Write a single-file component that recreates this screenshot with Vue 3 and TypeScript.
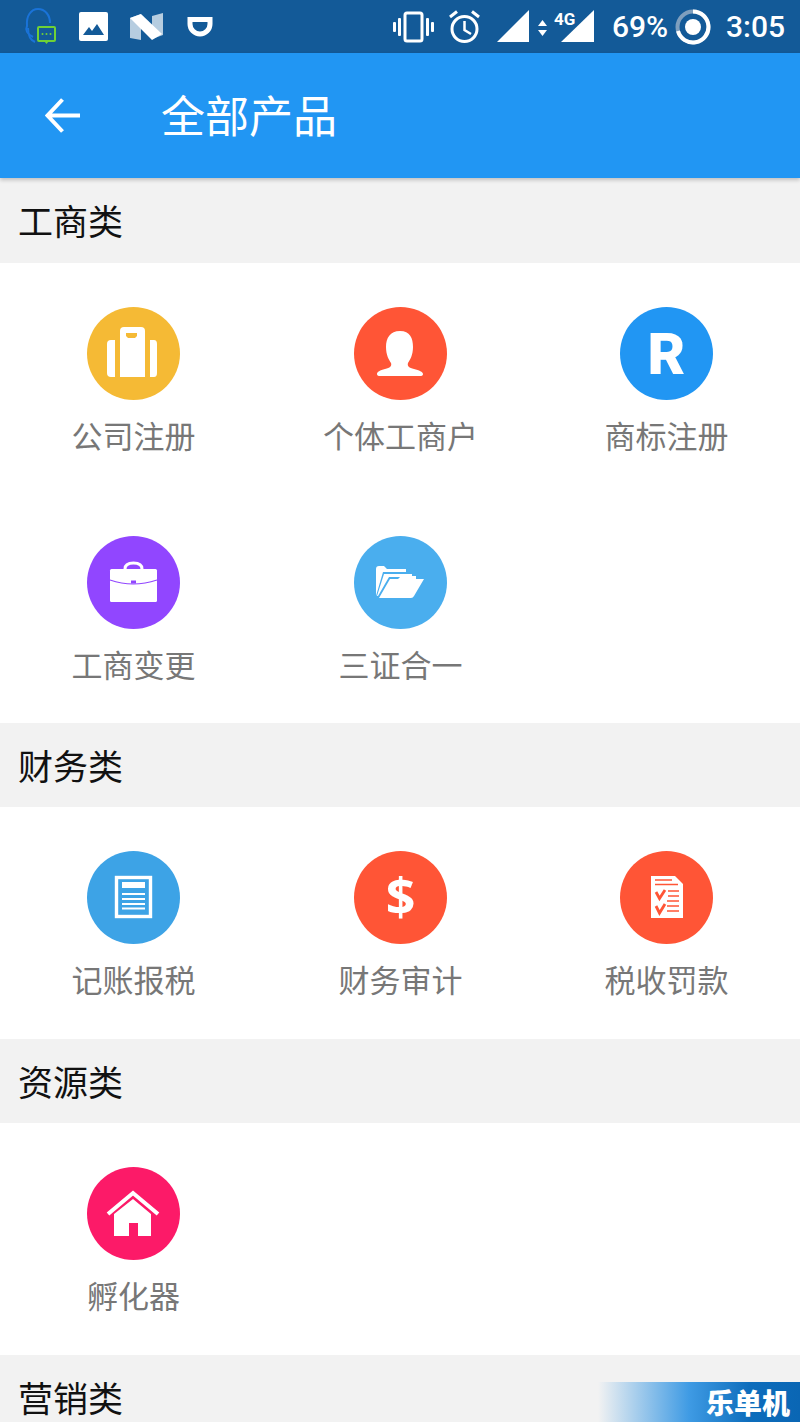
<script setup lang="ts">
type Item = { label: string; color: string; icon: string }
type Section = { title: string; items: Item[]; cls: string }

const sections: Section[] = [
  {
    title: '工商类',
    cls: 'two-rows',
    items: [
      { label: '公司注册', color: '#f5ba35', icon: 'case' },
      { label: '个体工商户', color: '#ff5536', icon: 'person' },
      { label: '商标注册', color: '#2196f3', icon: 'r' },
      { label: '工商变更', color: '#9146ff', icon: 'brief' },
      { label: '三证合一', color: '#4aaeee', icon: 'folder' },
    ],
  },
  {
    title: '财务类',
    cls: 'one-row',
    items: [
      { label: '记账报税', color: '#3da3e6', icon: 'doc' },
      { label: '财务审计', color: '#ff5536', icon: 'dollar' },
      { label: '税收罚款', color: '#ff5536', icon: 'check' },
    ],
  },
  {
    title: '资源类',
    cls: 'one-row',
    items: [{ label: '孵化器', color: '#fc1a68', icon: 'house' }],
  },
  { title: '营销类', cls: 'empty', items: [] },
]
</script>

<template>
  <div class="page">
    <div class="status">
      <svg class="s-head" width="32" height="38" viewBox="0 0 32 38">
        <path d="M9 29C3 26 1 22 3 18C2 8 7 1 14 1C21 1 26 7 26 15" fill="none" stroke="#1a73d8" stroke-width="2" />
        <path d="M4 20C4 26 6 32 11 34" fill="none" stroke="#1a73d8" stroke-width="2" />
        <rect x="14" y="19" width="17" height="14" rx="1" fill="#135a98" stroke="#6fd136" stroke-width="2" />
        <path d="M20 33h5l-2.500 3z" fill="#6fd136" />
        <circle cx="18.500" cy="26" r="1" fill="#6fd136" /><circle cx="22.500" cy="26" r="1" fill="#6fd136" /><circle cx="26.500" cy="26" r="1" fill="#6fd136" />
      </svg>
      <svg class="s-img" width="29" height="29" viewBox="0 0 29 29">
        <rect width="29" height="29" rx="2" fill="#fff" />
        <path d="M4 23L10 15L13 19L18 12L25 23Z" fill="#135a98" />
      </svg>
      <svg class="s-n" width="33" height="27" viewBox="0 0 33 27">
        <path d="M0 5L11 1V27L0 25Z" fill="#b6cde0" />
        <path d="M22 3L33 0V22L22 26Z" fill="#b6cde0" />
        <path d="M0 5L11 1L32 21L22 27Z" fill="#fff" />
      </svg>
      <svg class="s-d" width="26" height="20" viewBox="0 0 26 20">
        <path d="M3 2.500H23V7A10 10 0 0 1 3 7Z" fill="none" stroke="#fff" stroke-width="5" />
      </svg>
      <svg class="s-vib" width="41" height="32" viewBox="0 0 41 32" fill="#fff">
        <rect x="12" y="2" width="17" height="28" rx="2" fill="none" stroke="#fff" stroke-width="3" />
        <rect x="0" y="11" width="3" height="10" rx="1" /><rect x="5" y="7" width="3" height="18" rx="1" />
        <rect x="33" y="7" width="3" height="18" rx="1" /><rect x="38" y="11" width="3" height="10" rx="1" />
      </svg>
      <svg class="s-alarm" width="31" height="34" viewBox="0 0 31 34">
        <circle cx="15.500" cy="19" r="12.500" fill="none" stroke="#fff" stroke-width="3" />
        <path d="M15.500 11V20L22 24" fill="none" stroke="#fff" stroke-width="2.500" />
        <path d="M1 7L8 1.500M30 7L23 1.500" fill="none" stroke="#fff" stroke-width="3" />
      </svg>
      <svg class="s-sig" width="32" height="32" viewBox="0 0 32 32"><path d="M0 32L32 0V32Z" fill="#fff" /></svg>
      <svg class="s-arrows" width="9" height="16" viewBox="0 0 9 16" fill="#fff"><path d="M4.500 0L9 6H0Z" /><path d="M0 10H9L4.500 16Z" /></svg>
      <div class="s-sig2">
        <svg width="33" height="32" viewBox="0 0 33 32"><path d="M0 32L33 0V32Z" fill="#fff" /></svg>
        <span class="s-4g">4G</span>
      </div>
      <span class="s-pct">69%</span>
      <svg class="s-batt" width="36" height="36" viewBox="0 0 36 36">
        <circle cx="18" cy="18" r="15.500" fill="none" stroke="#7f9fbe" stroke-width="4" />
        <path d="M18 2.500A15.500 15.500 0 1 1 3 22" fill="none" stroke="#fff" stroke-width="4" />
        <circle cx="18" cy="18" r="8" fill="#fff" />
      </svg>
      <span class="s-time">3:05</span>
    </div>

    <header class="bar">
      <svg class="back" width="35" height="35" viewBox="0 0 35 35">
        <path d="M35 17.500H3M17.500 1.500L2.500 17.500L17.500 33.500" fill="none" stroke="#fff" stroke-width="4" />
      </svg>
      <h1 class="title">全部产品</h1>
    </header>

    <section v-for="sec in sections" :key="sec.title">
      <h2 class="head">{{ sec.title }}</h2>
      <div v-if="sec.items.length" class="grid" :class="sec.cls">
        <div v-for="item in sec.items" :key="item.label" class="cell">
          <svg class="icon" width="93" height="93" viewBox="0 0 93 93">
            <circle cx="46.500" cy="46.500" r="46.500" :fill="item.color" />
            <g v-if="item.icon === 'case'">
              <path d="M37 20H54Q58 20 58 24V70H33V24Q33 20 37 20Z" fill="#fff" />
              <path d="M39 26H50V29L48 31H41L39 29Z" :fill="item.color" />
              <path d="M28 33V70H24Q20 70 20 66V37Q20 33 24 33Z" fill="#fff" />
              <path d="M63 33V70H67Q70 70 70 66V37Q70 33 67 33Z" fill="#fff" />
            </g>
            <path v-else-if="item.icon === 'person'" d="M46 24C36 24 32 31 32 40C32 48 35 53 37 56C38 59 36 61 31 62C26 63 23 65 23 67Q23 69 26 69H66Q69 69 69 67C69 65 65 63 60 62C55 61 53 59 54 56C56 53 59 48 59 40C59 31 56 24 46 24Z" fill="#fff" />
            <text v-else-if="item.icon === 'r'" x="46.500" y="67" text-anchor="middle" class="glyph-r">R</text>
            <g v-else-if="item.icon === 'brief'">
              <path d="M38 33Q38 27 46.500 27Q55 27 55 33" fill="none" stroke="#fff" stroke-width="3" />
              <rect x="23" y="33" width="47" height="33" rx="1.500" fill="#fff" />
              <path d="M23 44Q46 52 70 44" fill="none" :stroke="item.color" stroke-width="1.200" />
              <rect x="44" y="44.500" width="5" height="3" :fill="item.color" />
            </g>
            <g v-else-if="item.icon === 'folder'" fill="#fff">
              <path d="M22 60V33Q22 30 25 30H30L33 33H52V36H29L22 60Z" />
              <path d="M23 60L30 38H58V41H35L24 60Z" />
              <path d="M25 62L36 43H44L47 40H62V43H70L60 60Q59 62 57 62Z" />
            </g>
            <g v-else-if="item.icon === 'doc'">
              <rect x="29.500" y="26.500" width="34" height="39" fill="none" stroke="#fff" stroke-width="3.400" />
              <rect x="35" y="31" width="23" height="6" fill="#fff" />
              <path d="M35 43H58M35 48H58M35 53H58M35 57.500H58" stroke="#fff" stroke-width="2.200" />
            </g>
            <text v-else-if="item.icon === 'dollar'" x="46.500" y="65" text-anchor="middle" class="glyph-d">$</text>
            <g v-else-if="item.icon === 'check'">
              <path d="M31 25H55L63 33V67H31Z" fill="#fff" />
              <path d="M35 29H52M35 33.500H58" :stroke="item.color" stroke-width="1.500" />
              <path d="M36 41L39.500 47.500L45 39M36 55L39.500 62L45 53" fill="none" :stroke="item.color" stroke-width="2.800" />
              <path d="M48 40H59M48 45H59M47 50H59M47 55H59M47 60H59" :stroke="item.color" stroke-width="1.600" />
            </g>
            <g v-else-if="item.icon === 'house'">
              <path d="M21 47L46 26L71 47" fill="none" stroke="#fff" stroke-width="4" />
              <path d="M27 69V47L46 32L64 47V69H51V56H42V69Z" fill="#fff" />
            </g>
          </svg>
          <span class="label">{{ item.label }}</span>
        </div>
      </div>
    </section>

    <div class="mark"><span>乐单机</span></div>
  </div>
</template>

<style>
html, body { margin: 0; background: #fff; }
</style>

<style scoped>
.page {
  position: relative;
  width: 800px;
  height: 1422px;
  overflow: hidden;
  background: #fff;
  font-family: "Noto Sans CJK SC", "Noto Sans", sans-serif;
}
.status {
  display: flex;
  align-items: flex-start;
  height: 53px;
  background: #135a98;
  color: #fff;
  font-family: Roboto, sans-serif;
}
.status svg { display: block; flex: none; }
.s-head { margin: 8px 0 0 24px; }
.s-img { margin: 12px 0 0 23px; }
.s-n { margin: 13px 0 0 22px; }
.s-d { margin: 17px 0 0 24px; }
.s-vib { margin: 11px 0 0 180px; }
.s-alarm { margin: 10px 0 0 15px; }
.s-sig { margin: 10px 0 0 17px; }
.s-arrows { margin: 20px 0 0 9px; }
.s-sig2 { position: relative; margin: 10px 0 0 14px; width: 33px; height: 32px; }
.s-4g {
  position: absolute;
  left: -7px;
  top: 1px;
  font-size: 17px;
  line-height: 16px;
  font-weight: 700;
}
.s-pct {
  margin: 8px 0 0 18px;
  width: 57px;
  font-size: 30px;
  line-height: 38px;
  font-weight: 500;
  white-space: nowrap;
}
.s-batt { margin: 9px 0 0 6px; }
.s-time {
  margin: 8px 0 0 15px;
  font-size: 30px;
  line-height: 38px;
  font-weight: 500;
  white-space: nowrap;
}
.bar {
  position: relative;
  z-index: 1;
  display: flex;
  align-items: center;
  height: 125px;
  background: #2196f3;
  box-shadow: 0 2px 4px rgba(0, 0, 0, 0.22);
}
.back { margin-left: 45px; flex: none; }
.title {
  margin: 0 0 4px 81px;
  color: #fff;
  font-size: 44px;
  line-height: 60px;
  font-weight: 400;
}
.head {
  margin: 0;
  padding-left: 18px;
  height: 84px;
  line-height: 83px;
  background: #f2f2f2;
  color: #111;
  font-size: 35px;
  font-weight: 400;
}
section:first-of-type .head { height: 85px; }
.grid {
  display: grid;
  grid-template-columns: 267px 267px 265px;
  background: #fff;
}
.two-rows { padding-bottom: 2px; }
.one-row { padding-bottom: 3px; }
.cell {
  display: flex;
  flex-direction: column;
  align-items: center;
  height: 229px;
  padding-top: 44px;
  box-sizing: border-box;
}
.icon { display: block; flex: none; }
.label {
  margin-top: 12px;
  color: #777;
  font-size: 31px;
  line-height: 46px;
  white-space: nowrap;
}
.glyph-r {
  font-family: Roboto, sans-serif;
  font-weight: 900;
  font-size: 58px;
  fill: #fff;
}
.glyph-d {
  font-family: "Open Sans", sans-serif;
  font-weight: 700;
  font-size: 52px;
  fill: #fff;
}
.mark {
  position: absolute;
  right: 0;
  bottom: 0;
  width: 202px;
  height: 40px;
  display: flex;
  align-items: center;
  justify-content: flex-end;
  background: linear-gradient(90deg, rgba(33, 140, 225, 0) 0%, #3f9be4 45%, #0d6dbc 75%, #0a66b4 100%);
}
.mark span {
  margin-right: 10px;
  color: #fff;
  font-size: 28px;
  line-height: 40px;
  font-weight: 900;
  white-space: nowrap;
}
</style>
